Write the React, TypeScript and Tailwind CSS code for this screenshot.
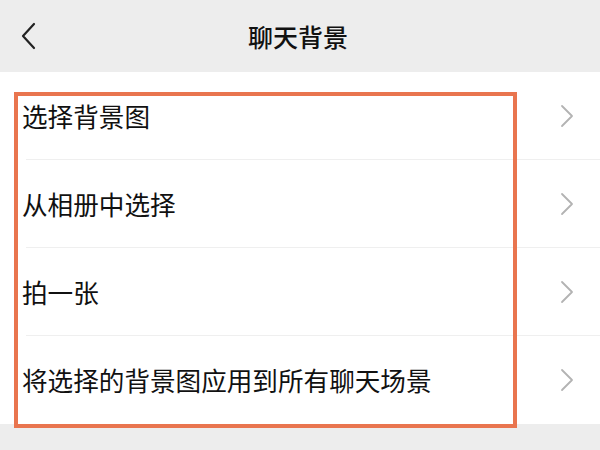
import React from "react";

const items = [
  "选择背景图",
  "从相册中选择",
  "拍一张",
  "将选择的背景图应用到所有聊天场景",
];

function ChevronRight() {
  return (
    <svg width="14" height="24" viewBox="0 0 14 24" fill="none">
      <path d="M2 2 L12 12 L2 22" stroke="#b3b3b3" strokeWidth="1.8" strokeLinecap="round" strokeLinejoin="round" />
    </svg>
  );
}

export default function App() {
  return (
    <div
      className="relative w-[600px] h-[450px] overflow-hidden bg-[#ededed] text-[#111]"
      style={{ fontFamily: '"Noto Sans CJK SC", "Noto Sans", sans-serif' }}
    >
      <div className="relative h-[72px] flex items-center justify-center">
        <div className="absolute left-[20px] top-[22px]">
          <svg width="16" height="28" viewBox="0 0 16 28" fill="none">
            <path d="M14 2 L3 14 L14 26" stroke="#222" strokeWidth="2.2" strokeLinecap="round" strokeLinejoin="round" />
          </svg>
        </div>
        <span className="text-[25px] font-medium leading-none ml-[-4px]">聊天背景</span>
      </div>
      <div className="bg-white">
        {items.map((t, i) => (
          <div key={i} className="h-[88px] flex flex-col">
            <div className="flex-1 flex items-center pl-[22px] pr-[26px]">
              <span className="flex-1 text-[25.6px] leading-none text-[#111]">{t}</span>
              <ChevronRight />
            </div>
            {i < items.length - 1 && <div className="ml-[26px] h-px bg-[#efefef]" />}
          </div>
        ))}
      </div>
      <div className="absolute left-[14px] top-[92px] w-[503px] h-[336px] border-4 border-[#e9754f] pointer-events-none" />
    </div>
  );
}
